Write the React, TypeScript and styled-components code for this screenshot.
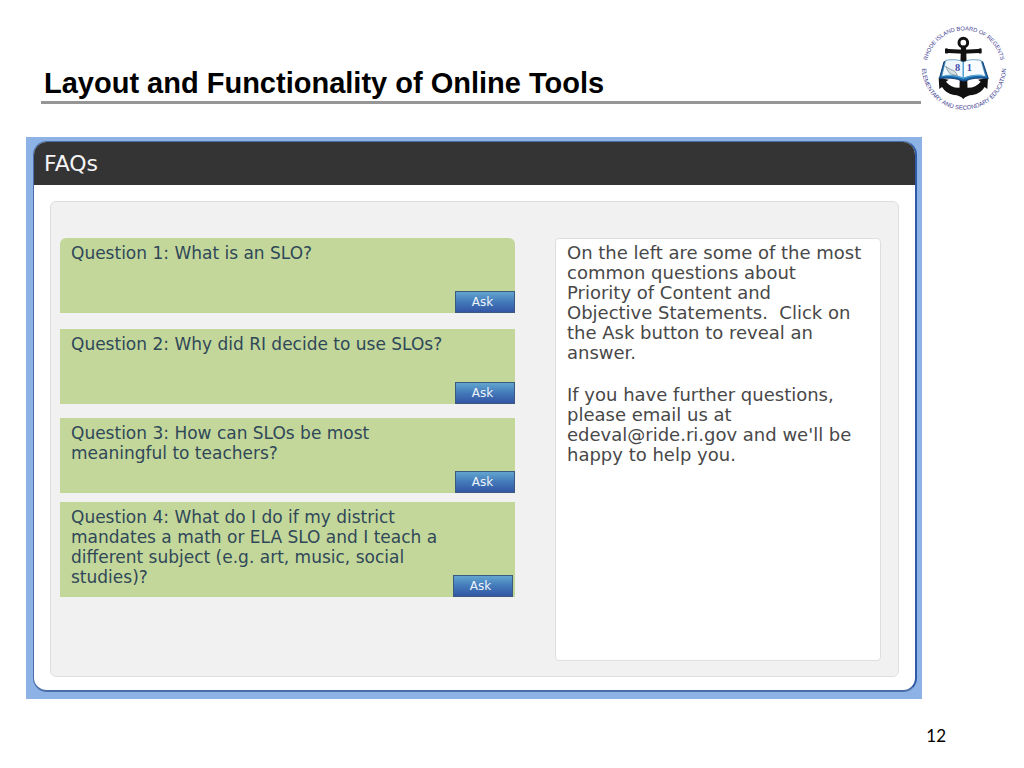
import React from "react";
import styled, { createGlobalStyle } from "styled-components";

const GlobalStyle = createGlobalStyle`
  *, *::before, *::after { box-sizing: border-box; }
  body { margin: 0; background: #fff; }
  h1, h2, p { margin: 0; font-weight: inherit; }
`;

const Slide = styled.div`
  padding: 25px 17px 20px 26px;
  font-family: "DejaVu Sans", Verdana, sans-serif;
`;

const SlideHeader = styled.header`
  display: flex;
  align-items: flex-start;
  padding-left: 15px;
`;

const Title = styled.h1`
  flex: 1;
  padding: 41px 0 0 3px;
  border-bottom: 3px solid #969696;
  color: #000;
  font: bold 29px/35px "Liberation Sans", Arial, sans-serif;
`;

const Seal = styled.svg`
  display: block;
  flex: none;
  width: 86px;
  height: 86px;
`;

const Stage = styled.main`
  margin: 26px 85px 0 0;
  padding: 4px 5px 7px 7px;
  background: #8db3e6;
`;

const Frame = styled.section`
  overflow: hidden;
  border: 1px solid #4a6fa8;
  border-right: 2px solid #2f5aa8;
  border-bottom-width: 2px;
  border-radius: 14px;
  background: #fff;
`;

const FrameTitle = styled.h2`
  padding: 0 10px;
  background: #343434;
  color: #f4f4f4;
  font-size: 22px;
  line-height: 43px;
`;

const Board = styled.div`
  display: grid;
  grid-template-columns: 455fr 326fr;
  column-gap: 40px;
  margin: 16px 16px 13px 16px;
  padding: 36px 17px 15px 9px;
  border: 1px solid #dedede;
  border-radius: 6px;
  background: #f1f1f1;
`;

const Questions = styled.div`
  display: flex;
  flex-direction: column;
`;

const Card = styled.article<{ $gap?: number; $rounded?: boolean; $inset?: boolean }>`
  display: flex;
  flex-direction: column;
  justify-content: space-between;
  min-height: 75px;
  margin-bottom: ${(p) => p.$gap ?? 0}px;
  padding: 5px ${(p) => (p.$inset ? 2 : 0)}px 0 11px;
  border-radius: ${(p) => (p.$rounded ? "6px 6px 0 0" : "0")};
  background: #c4d79b;
`;

const Prompt = styled.p`
  max-width: 385px;
  color: #2f4858;
  font-size: 17px;
  line-height: 20px;
`;

const AskButton = styled.button<{ $overlap?: boolean }>`
  align-self: flex-end;
  width: 60px;
  height: 22px;
  margin-top: ${(p) => (p.$overlap ? -12 : 0)}px;
  padding: 0 5px 0 0;
  border: 1px solid #3c5a80;
  background: linear-gradient(#62a5cf, #4379b9 50%, #3356a5);
  color: #eef4fb;
  font: 12px/18px "DejaVu Sans", Verdana, sans-serif;
`;

const Answer = styled.aside`
  min-height: 423px;
  padding: 4px 2px 4px 11px;
  border: 1px solid #dedede;
  border-radius: 4px;
  background: #fff;
  color: #484848;
  font-size: 18px;
  line-height: 20px;

  p + p { margin-top: 22px; }
`;

const PageNumber = styled.footer`
  padding: 26px 61px 0 0;
  color: #000;
  font: 17px/22px Lato, sans-serif;
  text-align: right;
`;

const questions = [
  { text: "Question 1: What is an SLO?", gap: 16, rounded: true },
  { text: "Question 2: Why did RI decide to use SLOs?", gap: 14 },
  { text: "Question 3: How can SLOs be most meaningful to teachers?", gap: 9 },
  {
    text: "Question 4: What do I do if my district mandates a math or ELA SLO and I teach a different subject (e.g. art, music, social studies)?",
    long: true,
  },
];

function BoardSeal() {
  return (
    <Seal viewBox="0 0 258 258" role="img" aria-label="Rhode Island Board of Regents seal">
      <defs>
        <path id="sealTop" d="M17 128 A112 112 0 0 1 241 128" />
        <path id="sealBottom" d="M3 128 A126 126 0 0 0 255 128" />
      </defs>
      <g fill="#3d3b91" fontFamily="Liberation Sans, Arial, sans-serif" fontSize="17" textAnchor="middle">
        <text>
          <textPath href="#sealTop" startOffset="50%">RHODE ISLAND BOARD OF REGENTS</textPath>
        </text>
        <text fontSize="18">
          <textPath href="#sealBottom" startOffset="50%">ELEMENTARY AND SECONDARY EDUCATION</textPath>
        </text>
      </g>
      <circle cx="127" cy="53" r="13" fill="none" stroke="#111" strokeWidth="9" />
      <path d="M120 62h15l5 138h-25z" fill="#111" />
      <path d="M72 71q5-3 10 1l45 2 45-2q6-4 10-1v13q-4 3-10 0l-45 2-45-2q-5 3-10 0z" fill="#111" />
      <path
        d="M53 158l30 6-8 6q14 18 38 18h28q24 0 38-18l-8-6 30-6-2 34-8-6q-12 20-36 24-18 1-28 12-10-11-28-12-24-4-36-24l-8 6z"
        fill="#111"
      />
      <path d="M69 110l-14 51q42-6 68 7h10q25-13 69-7l-17-51-53 9z" fill="#1768ad" stroke="#123c70" strokeWidth="3" />
      <path d="M74 106q34-6 53 5v48q-26-12-65-5z" fill="#eef7fc" stroke="#397aa8" strokeWidth="2" />
      <path d="M127 111q19-11 53-5l14 48q-39-6-67 5z" fill="#f8fcfe" stroke="#397aa8" strokeWidth="2" />
      <path d="M73 152q27-4 52 7M184 151q-30-3-54 8M127 112v50" fill="none" stroke="#53a5d7" strokeWidth="4" />
      <path d="M74 124l16 10q14 2 19 18-24-3-28-14z" fill="#d3dfe2" stroke="#657d86" strokeWidth="2" />
      <g fill="#4549ad" fontFamily="Liberation Serif, serif" fontSize="31" fontWeight="bold">
        <text x="102" y="138">8</text>
        <text x="137" y="138">1</text>
      </g>
    </Seal>
  );
}

export default function App() {
  return (
    <>
      <GlobalStyle />
      <Slide>
        <SlideHeader>
          <Title>Layout and Functionality of Online Tools</Title>
          <BoardSeal />
        </SlideHeader>
        <Stage>
          <Frame>
            <FrameTitle>FAQs</FrameTitle>
            <Board>
              <Questions>
                {questions.map((q) => (
                  <Card key={q.text} $gap={q.gap} $rounded={q.rounded} $inset={q.long}>
                    <Prompt>{q.text}</Prompt>
                    <AskButton type="button" $overlap={q.long}>Ask</AskButton>
                  </Card>
                ))}
              </Questions>
              <Answer>
                <p>
                  On the left are some of the most
                  <br />
                  common questions about
                  <br />
                  Priority of Content and
                  <br />
                  Objective Statements.&nbsp; Click on
                  <br />
                  the Ask button to reveal an
                  <br />
                  answer.
                </p>
                <p>
                  If you have further questions,
                  <br />
                  please email us at
                  <br />
                  edeval@ride.ri.gov and we'll be
                  <br />
                  happy to help you.
                </p>
              </Answer>
            </Board>
          </Frame>
        </Stage>
        <PageNumber>12</PageNumber>
      </Slide>
    </>
  );
}
